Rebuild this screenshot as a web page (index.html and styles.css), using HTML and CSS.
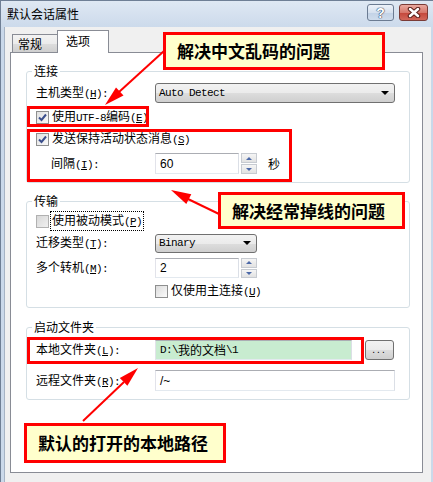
FILE: index.html
```html
<!DOCTYPE html>
<html lang="zh-CN">

<head>
  <meta charset="UTF-8">
  <title>默认会话属性</title>
  <link rel="stylesheet" href="styles.css">
</head>

<body>
  <div class="window">
    <div class="titlebar">
      <span class="title">默认会话属性</span>
      <div class="caption-btns">
        <div class="cap-btn help">?</div>
        <div class="cap-btn close">
          <svg width="14" height="11" viewBox="0 0 14 11">
            <path d="M3 2 L11 9 M11 2 L3 9" stroke="#5a1f1a" stroke-width="4.5" stroke-linecap="round" />
            <path d="M3 2 L11 9 M11 2 L3 9" stroke="#fff" stroke-width="2.5" stroke-linecap="round" />
          </svg>
        </div>
      </div>
    </div>

    <div class="client">
      <div class="tabs">
        <div class="tab">常规</div>
        <div class="tab active">选项</div>
      </div>

      <div class="panel">
        <fieldset class="group">
          <legend>连接</legend>
          <div class="row mt4">
            <span class="lbl">主机类型<span class="asc">(<u>H</u>):</span></span>
            <div class="select wide"><span class="mono">Auto Detect</span><i class="caret"></i></div>
          </div>
          <div class="row mt4">
            <span class="check on"><svg width="11" height="11" viewBox="0 0 11 11"><path d="M2 5.5 L4.5 8 L9 2.5" fill="none" stroke="#3b4f8c" stroke-width="2" /></svg></span>
            <span>使用<span class="asc">UTF-8</span>编码<span class="asc">(<u>E</u>)</span></span>
          </div>
          <div class="row mt2">
            <span class="check on"><svg width="11" height="11" viewBox="0 0 11 11"><path d="M2 5.5 L4.5 8 L9 2.5" fill="none" stroke="#3b4f8c" stroke-width="2" /></svg></span>
            <span>发送保持活动状态消息<span class="asc">(<u>S</u>)</span></span>
          </div>
          <div class="row mt4 h21">
            <span class="lbl indent">间隔<span class="asc">(<u>I</u>):</span></span>
            <div class="field num">60</div>
            <div class="spin"><div class="spin-btn"><i class="up"></i></div><div class="spin-btn"><i class="down"></i></div></div>
            <span class="unit">秒</span>
          </div>
        </fieldset>

        <fieldset class="group g2">
          <legend>传输</legend>
          <div class="row mt2">
            <span class="check off"></span>
            <span class="focus">使用被动模式<span class="asc">(<u>P</u>)</span></span>
          </div>
          <div class="row mt2">
            <span class="lbl">迁移类型<span class="asc">(<u>T</u>):</span></span>
            <div class="select short"><span class="mono">Binary</span><i class="caret"></i></div>
          </div>
          <div class="row mt5">
            <span class="lbl">多个转机<span class="asc">(<u>M</u>):</span></span>
            <div class="field num">2</div>
            <div class="spin"><div class="spin-btn"><i class="up"></i></div><div class="spin-btn"><i class="down"></i></div></div>
          </div>
          <div class="row mt3 push">
            <span class="check"></span>
            <span>仅使用主连接<span class="asc">(<u>U</u>)</span></span>
          </div>
        </fieldset>

        <fieldset class="group g3">
          <legend>启动文件夹</legend>
          <div class="row mt5">
            <span class="lbl">本地文件夹<span class="asc">(<u>L</u>):</span></span>
            <div class="field local"><span class="asc">D:\</span>我的文档<span class="asc">\1</span></div>
            <div class="browse">...</div>
          </div>
          <div class="row mt10 h21">
            <span class="lbl">远程文件夹<span class="asc">(<u>R</u>):</span></span>
            <div class="field remote">/~</div>
          </div>
        </fieldset>
      </div>
    </div>

    <!-- annotations drawn on top of the dialog -->
    <div class="overlay">
      <div class="mark m-utf"></div>
      <div class="mark m-keep"></div>
      <div class="mark m-local"></div>

      <svg class="arrows" width="433" height="482" viewBox="0 0 433 482">
        <g stroke="#f00" stroke-width="2" fill="#f00">
          <line x1="163" y1="50" x2="118" y2="91" />
          <polygon points="104,104 122.5,94.5 115,86.4" stroke="none" />
          <line x1="218" y1="213" x2="187" y2="198" />
          <polygon points="170,189 185.3,203 190.3,193.2" stroke="none" />
          <line x1="82" y1="420" x2="123" y2="381" />
          <polygon points="137,367 126.4,384.8 118.8,376.9" stroke="none" />
        </g>
      </svg>

      <div class="note n1">解决中文乱码的问题</div>
      <div class="note n2">解决经常掉线的问题</div>
      <div class="note n3">默认的打开的本地路径</div>
    </div>
  </div>
</body>

</html>
```

FILE: styles.css
```css
* {
  margin: 0;
  padding: 0;
  box-sizing: border-box;
}

body {
  font-family: "Noto Sans CJK SC", "Liberation Sans", sans-serif;
  font-size: 12px;
  line-height: 16px;
  color: #000;
  background: #fff;
}

u {
  text-decoration: underline;
}

/* ascii in the dialog font runs 6px per glyph */
.asc {
  font-family: "Liberation Mono", monospace;
  font-size: 11px;
  letter-spacing: -0.6px;
}

.window {
  position: relative;
  width: 433px;
  height: 482px;
  padding: 0 2px 0 3px;
  background: linear-gradient(#dfe8f3, #c9d8ea 30px, #cbd9ea);
  border-left: 1px solid #6f7f95;
  border-top: 1px solid #6f7f95;
  overflow: hidden;
}

/* title bar */
.titlebar {
  height: 26px;
  display: flex;
  align-items: flex-start;
  justify-content: space-between;
  padding: 0 3px 0 3px;
}

.title {
  margin-top: 5px;
}

.caption-btns {
  display: flex;
  gap: 5px;
  margin-top: 3px;
}

.cap-btn {
  height: 17px;
  border: 1px solid #6b7b92;
  border-radius: 3px;
  display: flex;
  align-items: center;
  justify-content: center;
}

.help {
  width: 27px;
  background: linear-gradient(#edf2f9, #d6e1ef 50%, #c2d2e6 51%, #cfdcec);
  color: #fff;
  font-family: "Liberation Sans", sans-serif;
  font-weight: bold;
  font-size: 14px;
  text-shadow: 0 0 1px #2c3e5c, 0 0 1px #2c3e5c, 0 0 1px #2c3e5c;
}

.close {
  width: 29px;
  border-color: #7a3b36;
  background: linear-gradient(#e9a99f, #d7776b 50%, #c4463a 51%, #d2675a);
}

/* client area */
.client {
  height: 456px;
  background: #f0f0f0;
  border-left: 1px solid #a6b3c4;
}

.tabs {
  height: 25px;
  display: flex;
  align-items: flex-end;
  padding-left: 7px;
}

.tab {
  width: 46px;
  height: 18px;
  border: 1px solid #898c95;
  border-bottom: none;
  background: linear-gradient(#f3f3f3, #ebebeb 50%, #dddddd 51%, #cfcfcf);
  padding-left: 5px;
  line-height: 17px;
}

.tab.active {
  position: relative;
  z-index: 1;
  width: 52px;
  height: 23px;
  margin-left: -1px;
  margin-bottom: -1px;
  background: #fff;
  padding-left: 8px;
  line-height: 20px;
}

.panel {
  width: 413px;
  height: 421px;
  margin-left: 5px;
  border: 1px solid #898c95;
  background: #fff;
  padding: 10px 12px 0 15px;
}

/* group boxes */
.group {
  border: 1px solid #d5dfe5;
  border-radius: 3px;
  padding: 0 0 8px 9px;
  min-width: 0;
}

.group legend {
  padding: 0 2px;
  margin-left: -4px;
  line-height: 16px;
}

.g2 {
  margin-top: 10px;
  padding-bottom: 6px;
}

.g3 {
  margin-top: 11px;
}

.row {
  display: flex;
  align-items: center;
  height: 20px;
  white-space: nowrap;
}

.h21 {
  height: 21px;
}

.mt2 { margin-top: 2px; }
.mt3 { margin-top: 3px; }
.mt4 { margin-top: 4px; }
.mt5 { margin-top: 5px; }
.mt10 { margin-top: 10px; }

.lbl {
  width: 119px;
  flex-shrink: 0;
}

.indent {
  padding-left: 15px;
}

.push {
  padding-left: 119px;
}

/* checkboxes */
.check {
  width: 13px;
  height: 13px;
  border: 1px solid #8e8f8f;
  background: linear-gradient(135deg, #dcdcdc, #fbfbfb);
  margin-right: 3px;
  display: flex;
  align-items: center;
  justify-content: center;
  flex-shrink: 0;
}

.check.on {
  background: linear-gradient(135deg, #e0e0e0, #fafafa);
}

.check.off {
  border-color: #b1b1b1;
  background: linear-gradient(135deg, #d8d8d8, #f0f0f0);
}

.focus {
  outline: 1px dotted #000;
  outline-offset: 0;
  padding: 0 1px;
  margin-left: -1px;
}

/* combo boxes */
.select {
  height: 20px;
  border: 1px solid #707070;
  border-radius: 3px;
  background: linear-gradient(#f2f2f2, #ebebeb 50%, #dddddd 51%, #cfcfcf);
  display: flex;
  align-items: center;
  justify-content: space-between;
  padding: 0 5px 0 3px;
}

.select.wide {
  width: 240px;
}

.select.short {
  width: 102px;
  height: 19px;
}

.mono {
  font-family: "Liberation Mono", monospace;
  font-size: 11px;
  letter-spacing: -0.6px;
}

.caret {
  width: 0;
  height: 0;
  border-left: 4px solid transparent;
  border-right: 4px solid transparent;
  border-top: 4px solid #000;
}

/* text fields */
.field {
  height: 100%;
  border: 1px solid;
  border-color: #abadb3 #dbdfe6 #e3e9ef #e2e3ea;
  background: #fff;
  display: flex;
  align-items: center;
  padding-left: 4px;
  font-family: "Liberation Sans", "Noto Sans CJK SC", sans-serif;
}

.field.num {
  width: 84px;
}

.field.local {
  width: 197px;
  background: #c8ecd0;
  font-family: "Noto Sans CJK SC", sans-serif;
}

.field.remote {
  width: 240px;
}

.spin {
  width: 16px;
  height: 100%;
  margin-left: 2px;
  display: flex;
  flex-direction: column;
  gap: 1px;
}

.spin-btn {
  flex: 1;
  border: 1px solid #c7cbd1;
  background: linear-gradient(#f5f5f5, #e2e2e2);
  display: flex;
  align-items: center;
  justify-content: center;
}

.spin-btn i {
  width: 0;
  height: 0;
  border-left: 3px solid transparent;
  border-right: 3px solid transparent;
}

.spin-btn .up {
  border-bottom: 3px solid #4c69a8;
}

.spin-btn .down {
  border-top: 3px solid #4c69a8;
}

.unit {
  margin-left: 11px;
}

.browse {
  width: 29px;
  height: 20px;
  margin-left: 13px;
  border: 1px solid #707070;
  border-radius: 3px;
  background: linear-gradient(#f2f2f2, #ebebeb 50%, #dddddd 51%, #cfcfcf);
  text-align: center;
  line-height: 18px;
  letter-spacing: 2px;
  font-family: "Liberation Sans", sans-serif;
  font-size: 10px;
}

/* annotation layer */
.overlay {
  position: absolute;
  left: 0;
  top: 0;
  width: 433px;
  height: 482px;
  pointer-events: none;
}

.arrows {
  position: absolute;
  left: 0;
  top: 0;
}

.mark {
  position: absolute;
  border: 3px solid #f00;
}

.m-utf {
  left: 26px;
  top: 105px;
  width: 122px;
  height: 21px;
}

.m-keep {
  left: 26px;
  top: 128px;
  width: 265px;
  height: 53px;
}

.m-local {
  left: 26px;
  top: 336px;
  width: 337px;
  height: 27px;
}

.note {
  position: absolute;
  border: 3px solid #f00;
  background: #ffffcc;
  font-weight: bold;
  font-size: 17px;
  line-height: 20px;
  display: flex;
  align-items: center;
  padding-left: 11px;
}

.n1 {
  left: 162px;
  top: 31px;
  width: 222px;
  height: 38px;
}

.n2 {
  left: 217px;
  top: 191px;
  width: 187px;
  height: 37px;
}

.n3 {
  left: 23px;
  top: 422px;
  width: 202px;
  height: 40px;
}
```
